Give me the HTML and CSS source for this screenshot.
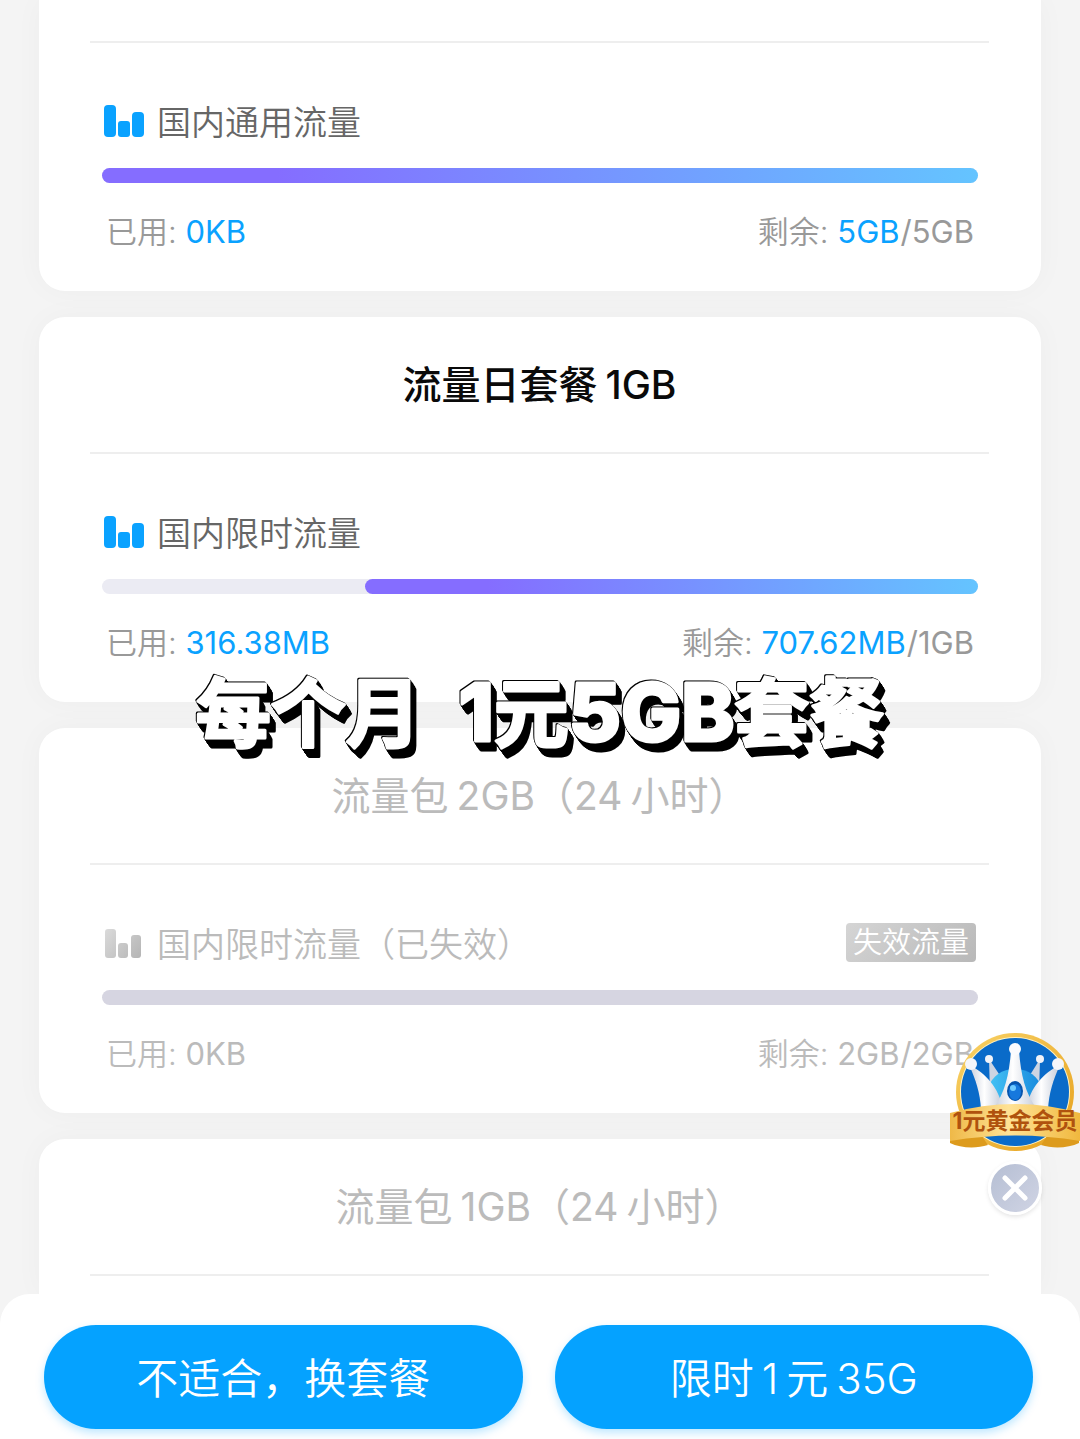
FILE: index.html
```html
<!DOCTYPE html>
<html lang="zh-CN">
<head>
<meta charset="utf-8">
<meta name="viewport" content="width=device-width, initial-scale=1">
<title>流量套餐</title>
<link rel="stylesheet" href="styles.css">
</head>
<body>
<main class="plans">
  <section class="card card--first">
    <div class="card__body">
      <h3 class="flow">
        <svg class="flow__icon" viewBox="0 0 40 32" aria-hidden="true"><rect x="0" y="0" width="12" height="32" rx="4"/><rect x="14" y="16" width="12" height="16" rx="3"/><rect x="28" y="7" width="12" height="25" rx="4"/></svg>
        <span>国内通用流量</span>
      </h3>
      <div class="bar"><div class="bar__left" style="width:100%"></div></div>
      <div class="stats"><span>已用: <b>0KB</b></span><span>剩余: <b>5GB</b><span class="stats__total">/5GB</span></span></div>
    </div>
  </section>

  <section class="card">
    <h2 class="card__title">流量日套餐<span class="gap"></span>1GB</h2>
    <div class="card__body">
      <h3 class="flow">
        <svg class="flow__icon" viewBox="0 0 40 32" aria-hidden="true"><rect x="0" y="0" width="12" height="32" rx="4"/><rect x="14" y="16" width="12" height="16" rx="3"/><rect x="28" y="7" width="12" height="25" rx="4"/></svg>
        <span>国内限时流量</span>
      </h3>
      <div class="bar"><div class="bar__left" style="width:70%"></div></div>
      <div class="stats"><span>已用: <b>316.38MB</b></span><span>剩余: <b>707.62MB</b><span class="stats__total">/1GB</span></span></div>
    </div>
    <svg class="caption">
      <text x="50%" y="75" text-anchor="middle">每个月 <tspan class="caption__latin" dx="20">1</tspan>元<tspan class="caption__latin">5GB</tspan>套餐</text>
    </svg>
  </section>

  <section class="card card--expired">
    <h2 class="card__title">流量包<span class="gap"></span>2GB（24<span class="gap"></span>小时）</h2>
    <div class="card__body">
      <h3 class="flow">
        <svg class="flow__icon" viewBox="0 0 40 32" aria-hidden="true">
          <defs><linearGradient id="grey" x1="0" y1="0" x2="40" y2="32" gradientUnits="userSpaceOnUse"><stop offset="0" stop-color="#dcdcdc"/><stop offset="1" stop-color="#b2b2b2"/></linearGradient></defs>
          <g fill="url(#grey)"><rect x="1" y="2" width="11" height="29" rx="3"/><rect x="14" y="16" width="10" height="15" rx="3"/><rect x="27" y="8" width="10" height="23" rx="3"/></g>
        </svg>
        <span>国内限时流量（已失效）</span>
        <span class="tag">失效流量</span>
      </h3>
      <div class="bar"></div>
      <div class="stats"><span>已用: <b>0KB</b></span><span>剩余: <b>2GB</b><span class="stats__total">/2GB</span></span></div>
    </div>
  </section>

  <section class="card card--expired card--last">
    <h2 class="card__title">流量包<span class="gap"></span>1GB（24<span class="gap"></span>小时）</h2>
  </section>

  <aside class="promo">
    <a class="promo__link" href="#member" aria-label="1元黄金会员">
      <svg class="promo__art" viewBox="0 0 131 120">
        <defs>
          <linearGradient id="gold" x1="0" y1="0" x2="1" y2="1"><stop offset="0" stop-color="#f9d368"/><stop offset="1" stop-color="#e6a01c"/></linearGradient>
          <linearGradient id="ribbon" x1="0" y1="0" x2="1" y2="0"><stop offset="0" stop-color="#efb948"/><stop offset=".45" stop-color="#ffe295"/><stop offset="1" stop-color="#f0b83e"/></linearGradient>
          <linearGradient id="silver" x1="0" y1="0" x2="1" y2="0"><stop offset="0" stop-color="#c6ccda"/><stop offset=".45" stop-color="#ffffff"/><stop offset="1" stop-color="#c3cad8"/></linearGradient>
          <linearGradient id="dome" x1="0" y1="0" x2="1" y2="0"><stop offset="0" stop-color="#45c3f5"/><stop offset="1" stop-color="#1689dd"/></linearGradient>
        </defs>
        <circle cx="66" cy="59" r="59" fill="url(#gold)"/>
        <circle cx="66" cy="59" r="55" fill="#fff3c4"/>
        <circle cx="66" cy="59" r="54" fill="#0a6bc9"/>
        <path d="M40 26l16 24-15 10zM91 26L76 50l14 10z" fill="#cdd4e2"/>
        <circle cx="40" cy="26" r="4" fill="#f1f3f8"/><circle cx="91" cy="26" r="4" fill="#f1f3f8"/>
        <path d="M39 75V55c4-12 14-19 27-19s23 7 27 19v20z" fill="url(#dome)"/>
        <path d="M20 32c17 8 30 23 34 44H32c-1-16-5-29-12-44z" fill="url(#silver)"/>
        <path d="M111 32C94 40 81 55 77 76h22c1-16 5-29 12-44z" fill="url(#silver)"/>
        <path d="M62 18h8c2 24 6 42 18 58H44c12-16 16-34 18-58z" fill="url(#silver)"/>
        <circle cx="66" cy="16" r="6" fill="#fafbfe"/><circle cx="22" cy="31" r="6" fill="#f5f6fa"/><circle cx="109" cy="31" r="6" fill="#f5f6fa"/>
        <ellipse cx="66" cy="58" rx="8" ry="10" fill="#0755ad"/><ellipse cx="66" cy="59" rx="6" ry="8" fill="#1678dd"/><ellipse cx="64" cy="55" rx="3" ry="3" fill="#70cbff"/>
        <path d="M1 98v12c10 5 26 6 38 2l-9-13zM130 98v12c-10 5-26 6-38 2l9-13z" fill="#dd9b1d"/>
        <path d="M1 80Q66 62 131 80v28Q66 97 1 108z" fill="url(#ribbon)"/>
        <text class="promo__text" x="66" y="96" text-anchor="middle">1元黄金会员</text>
      </svg>
    </a>
    <button class="promo__close" type="button" aria-label="关闭">
      <svg viewBox="0 0 28 28" aria-hidden="true"><path d="M4 4l20 20M24 4L4 24"/></svg>
    </button>
  </aside>
</main>
<footer class="dock">
  <button class="dock__btn" type="button">不适合，换套餐</button>
  <button class="dock__btn" type="button">限时<span class="gap"></span>1<span class="gap"></span>元<span class="gap"></span>35G</button>
</footer>
</body>
</html>
```
FILE: styles.css
```css
* { box-sizing: border-box; }

body {
  margin: 0;
  min-height: 100vh;
  display: flex;
  flex-direction: column;
  background: #f4f4f4;
  font-family: Inter, "Noto Sans CJK SC", sans-serif;
  font-weight: 350;
}

h2, h3 { margin: 0; font-weight: inherit; }

.gap { display: inline-block; width: 8px; }

.plans {
  position: relative;
  flex: 1;
  display: flex;
  flex-direction: column;
  gap: 26px;
  padding: 0 39px;
}

.card {
  position: relative;
  padding: 0 52px 0 51px;
  border-radius: 26px;
  background: #fff;
  box-shadow: 0 0 30px rgba(0, 0, 0, .03);
}

.card--first { padding-top: 41px; border-radius: 0 0 26px 26px; }
.card--last { flex: 1; border-radius: 26px 26px 0 0; }

.card__title {
  height: 135px;
  font-size: 39px;
  line-height: 135px;
  font-weight: 500;
  text-align: center;
  color: #0a0a0a;
}

.card__body {
  border-top: 2px solid #eee;
  padding: 52px 11px 37px 12px;
}

.card--last .card__title { border-bottom: 2px solid #eee; height: 137px; }

.flow {
  display: flex;
  align-items: center;
  gap: 13px;
  height: 50px;
  padding-left: 2px;
  font-size: 34px;
  color: #666;
}

.flow__icon { width: 40px; height: 32px; margin-top: 2px; fill: #0aa2ff; }

.bar {
  height: 15px;
  margin: 23px 0 27px;
  border-radius: 8px;
  background: #ebebf3;
}

.bar__left {
  height: 100%;
  margin-left: auto;
  border-radius: 8px;
  background: linear-gradient(90deg, #856dff 20%, #64c4ff);
}

.stats {
  display: flex;
  justify-content: space-between;
  padding: 0 4px;
  font-size: 31px;
  line-height: 44px;
  color: #999;
}

.stats b, .stats__total { font-weight: 400; }
.stats b { color: #0aa2ff; }
.stats__total { margin-left: 1px; }

.card--expired .card__title,
.card--expired .flow,
.card--expired .stats,
.card--expired .stats b { color: #bbb; }
.card--expired .card__title { font-weight: 400; }
.card--expired .bar { background: #d6d5e1; }

.flow .tag {
  margin-left: auto;
  margin-right: 2px;
  padding: 0 7px;
  border-radius: 4px;
  background: linear-gradient(135deg, #d5d5d5, #b8b8b8);
  color: #fff;
  font-size: 29px;
  line-height: 39px;
}

.caption {
  position: absolute;
  left: 0;
  bottom: -64px;
  z-index: 2;
  width: 100%;
  height: 100px;
  overflow: visible;
  font-size: 75px;
  font-weight: 700;
  fill: #fff;
  stroke: #fff;
  stroke-width: 3;
  stroke-linejoin: round;
  filter: drop-shadow(1px 1px 0 #000) drop-shadow(-1px -1px 0 #000)
    drop-shadow(1px 2px 0 #000) drop-shadow(2px 3px 0 #000) drop-shadow(2px 3px 0 #000);
}

.caption__latin { font-size: 80px; font-weight: 800; }

.promo {
  position: absolute;
  right: 0;
  bottom: 79px;
  width: 131px;
  display: flex;
  flex-direction: column;
  align-items: center;
  gap: 8px;
}

.promo__link, .promo__art { display: block; width: 100%; }

.promo__text {
  font-size: 23px;
  font-weight: 700;
  fill: #b0520e;
}

.promo__close {
  width: 54px;
  height: 54px;
  padding: 0;
  border: 3px solid #fff;
  border-radius: 50%;
  background: linear-gradient(135deg, #b5bed3, #d0d4e4);
  box-shadow: 0 2px 4px rgba(0, 0, 0, .1);
}

.promo__close svg {
  display: block;
  width: 28px;
  margin: auto;
  fill: none;
  stroke: #fff;
  stroke-width: 5;
  stroke-linecap: round;
}

.dock {
  position: relative;
  display: flex;
  gap: 32px;
  padding: 31px 47px 10px 44px;
  border-radius: 30px 30px 0 0;
  background: #fff;
}

.dock__btn {
  flex: 1;
  height: 104px;
  padding: 0 0 4px;
  border: 0;
  border-radius: 52px;
  background: #05a2ff;
  box-shadow: 0 4px 8px rgba(5, 162, 255, .25);
  color: #fff;
  font: inherit;
  font-size: 42px;
}
```
